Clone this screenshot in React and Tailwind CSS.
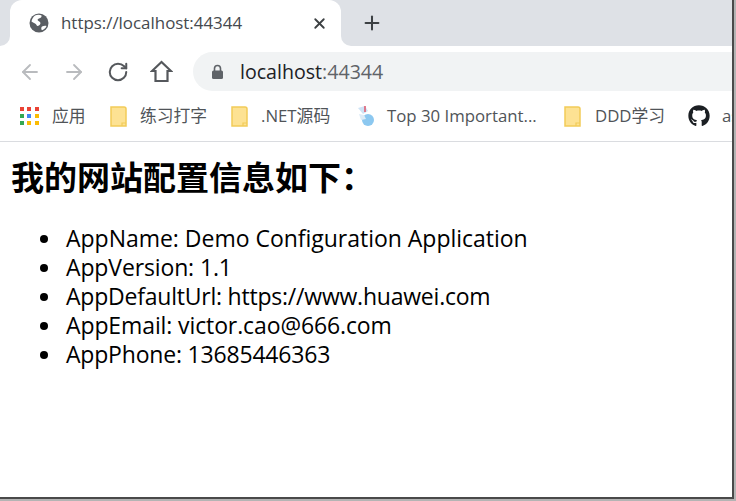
import React from "react";
import { ArrowLeft, ArrowRight, RotateCw, X, Plus } from "lucide-react";
import { FaGithub } from "react-icons/fa";

const font = { fontFamily: '"Open Sans","Noto Sans CJK SC",sans-serif' };

function Globe() {
  return (
    <svg width="20" height="20" viewBox="0 0 20 20" className="shrink-0">
      <circle cx="10" cy="10" r="9.5" fill="#5a5e63" />
      <path d="M6 2.500c2-1 5-1 6.500 0 .5 1.500-1 2.500-2.500 3-1.500.3-2 1.500-.5 2.500 1.800.8 2.500 2 1.500 3.500-1 1.500-3 2-3.500.5C7 10.500 4.500 10 2.500 8.500 3 6 4 4 6 2.500z" fill="#fff" />
      <path d="M13 13.500c1.500-.8 3.500-1 4.500-.5-.8 2-2.200 3.500-4.500 4.300-1-1-1-2.800 0-3.800z" fill="#fff" />
    </svg>
  );
}

function HomeIcon() {
  return (
    <svg width="23" height="23" viewBox="0 0 23 23" className="shrink-0 ml-[21px]">
      <path d="M11.500 2 2 11h3.500v10h12V11H21z" fill="none" stroke="#55585c" strokeWidth="2.200" strokeLinejoin="miter" />
    </svg>
  );
}

function LockIcon() {
  return (
    <svg width="13" height="16" viewBox="0 0 13 16" className="shrink-0">
      <path d="M3.500 7V4.500a3 3 0 0 1 6 0V7" fill="none" stroke="#5f6368" strokeWidth="1.600" />
      <rect x="1" y="6.500" width="11" height="8.500" rx="1.500" fill="#5f6368" />
    </svg>
  );
}

function Folder() {
  return (
    <svg width="17" height="21" viewBox="0 0 17 21" className="shrink-0">
      <path d="M1 1h13a2 2 0 0 1 2 2v17H1z" fill="#fde293" stroke="#f2cb58" strokeWidth="1.500" />
      <path d="M12 20v-3h4" fill="none" stroke="#f2cb58" strokeWidth="1.200" />
    </svg>
  );
}

function Apps() {
  const colors = ["#ea4335", "#ea4335", "#ea4335", "#34a853", "#4285f4", "#fbbc04", "#34a853", "#fbbc04", "#fbbc04"];
  return (
    <div className="grid grid-cols-3 gap-[3px] w-[19px] shrink-0">
      {colors.map((c, i) => (
        <span key={i} className="w-[4px] h-[4px]" style={{ background: c }} />
      ))}
    </div>
  );
}

function Favicon() {
  return (
    <svg width="20" height="22" viewBox="0 0 20 22" className="shrink-0">
      <path d="M3 3l7-2 3 5-5 3z" fill="#cfe3f5" />
      <path d="M10 1v6" stroke="#e0566a" strokeWidth="1.500" />
      <circle cx="13" cy="15" r="6" fill="#8cc8f0" />
      <path d="M4 9l5 1 2 4-5 1z" fill="#dcebf7" />
    </svg>
  );
}

function Bookmark({ icon, label, className }) {
  return (
    <div className={`flex items-center shrink-0 ${className}`}>
      {icon}
      <span>{label}</span>
    </div>
  );
}

const items = [
  ["AppName: Demo Configuration Application", "tracking-[-0.02px]"],
  ["AppVersion: 1.1", "tracking-[-0.13px]"],
  ["AppDefaultUrl: https://www.huawei.com", "tracking-[-0.22px]"],
  ["AppEmail: victor.cao@666.com", "tracking-[-0.11px]"],
  ["AppPhone: 13685446363", "tracking-[-0.19px]"],
];

export default function App() {
  return (
    <div className="w-[736px] h-[501px] overflow-hidden bg-[#b4b4b4]" style={font}>
      <div className="w-[734px] h-[499px] bg-white border-r-2 border-b-2 border-[#4a4a4a] overflow-hidden">
        <div className="flex h-[46px] bg-white">
          <div className="w-[10px] bg-[#dee1e6] rounded-br-[10px]" />
          <div className="bg-[#dee1e6] w-[331px]">
            <div className="h-full bg-white rounded-t-[12px] flex items-center pl-[19px] pr-[13px] text-[#45494e] text-[16.900px]">
              <Globe />
              <span className="ml-[12px] flex-1">https://localhost:44344</span>
              <X size={17} strokeWidth={2.600} color="#3c4043" />
            </div>
          </div>
          <div className="flex-1 bg-[#dee1e6] rounded-bl-[10px] flex items-center pl-[20px]">
            <Plus size={22} strokeWidth={2.200} color="#3c4043" />
          </div>
        </div>

        <div className="flex items-start h-[45px] pt-[6px] pl-[18px]">
          <div className="flex items-center h-[39px]">
            <ArrowLeft size={24} strokeWidth={1.800} color="#b9bbbe" />
            <ArrowRight size={24} strokeWidth={1.800} color="#b9bbbe" className="ml-[20px]" />
            <RotateCw size={22} strokeWidth={2.200} color="#55585c" className="ml-[21px]" />
            <HomeIcon />
          </div>
          <div className="ml-[20px] flex-1 h-[39px] bg-[#f1f3f4] rounded-l-full flex items-center pl-[18px] text-[#202124] text-[19.600px]">
            <LockIcon />
            <span className="ml-[16px]">
              localhost<span className="text-[#5f6368]">:44344</span>
            </span>
          </div>
        </div>

        <div className="flex items-center h-[51px] border-b border-[#dadce0] text-[#505458] text-[16.800px] pl-[20px] whitespace-nowrap overflow-hidden">
          <Bookmark icon={<Apps />} label="应用" className="gap-[13px] w-[90px]" />
          <Bookmark icon={<Folder />} label="练习打字" className="gap-[13px] w-[121px]" />
          <Bookmark icon={<Folder />} label=".NET源码" className="gap-[13px] w-[124px]" />
          <Bookmark icon={<Favicon />} label="Top 30 Important..." className="gap-[12px] w-[209px]" />
          <Bookmark icon={<Folder />} label="DDD学习" className="gap-[14px] w-[124px]" />
          <Bookmark icon={<FaGithub size={22} color="#1b1f23" />} label="as" className="gap-[12px]" />
        </div>

        <div className="pl-[11px] pt-[16px] text-black">
          <h1 className="text-[33px] leading-[40px] font-bold">我的网站配置信息如下：</h1>
          <ul className="mt-[26px] pl-[29px] text-[23px] leading-[29px]">
            {items.map(([t, tr]) => (
              <li key={t} className={`flex items-center ${tr}`}>
                <span className="w-[8px] h-[8px] rounded-full bg-black shrink-0 mr-[18px]" />
                {t}
              </li>
            ))}
          </ul>
        </div>
      </div>
    </div>
  );
}
